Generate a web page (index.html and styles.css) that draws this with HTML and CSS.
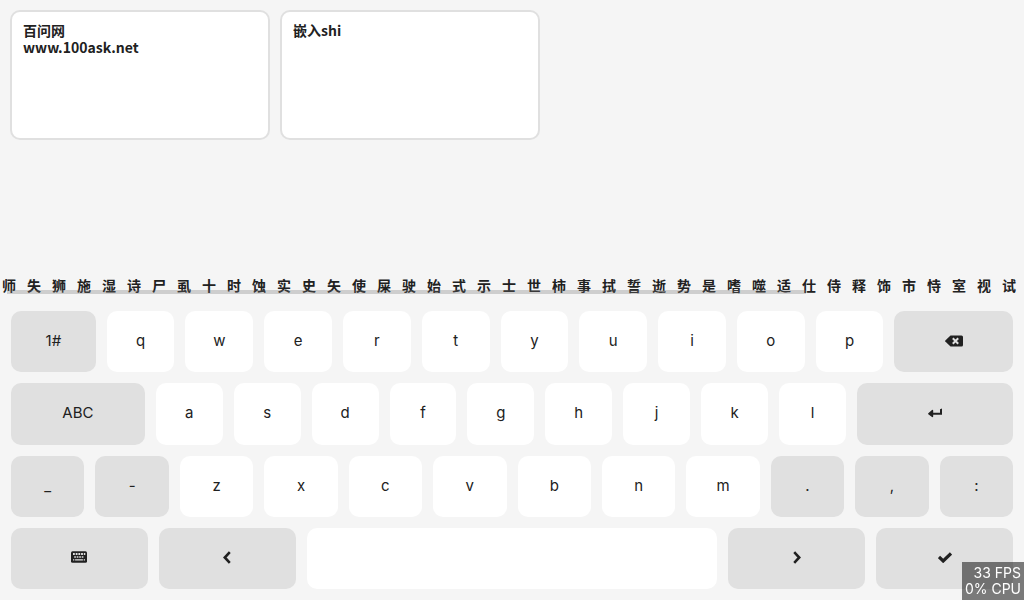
FILE: index.html
```html
<!DOCTYPE html>
<html lang="zh-CN">
<head>
<meta charset="utf-8">
<meta name="viewport" content="width=device-width, initial-scale=1">
<title>百问网</title>
<link rel="stylesheet" href="styles.css">
</head>
<body>
<main class="screen">
  <section class="notes">
    <textarea class="note" aria-label="文本框一" spellcheck="false">百问网
www.100ask.net</textarea>
    <textarea class="note" aria-label="文本框二" spellcheck="false">嵌入shi</textarea>
  </section>

  <div class="candidates">
    <button>师</button><button>失</button><button>狮</button><button>施</button><button>湿</button><button>诗</button><button>尸</button><button>虱</button><button>十</button><button>时</button><button>蚀</button><button>实</button><button>史</button><button>矢</button><button>使</button><button>屎</button><button>驶</button><button>始</button><button>式</button><button>示</button><button>士</button><button>世</button><button>柿</button><button>事</button><button>拭</button><button>誓</button><button>逝</button><button>势</button><button>是</button><button>嗜</button><button>噬</button><button>适</button><button>仕</button><button>侍</button><button>释</button><button>饰</button><button>市</button><button>恃</button><button>室</button><button>视</button><button>试</button>
    <div class="scrollbar"></div>
  </div>

  <section class="keyboard">
    <div class="row">
      <button class="key control w5">1#</button>
      <button class="key w4">q</button><button class="key w4">w</button><button class="key w4">e</button><button class="key w4">r</button><button class="key w4">t</button><button class="key w4">y</button><button class="key w4">u</button><button class="key w4">i</button><button class="key w4">o</button><button class="key w4">p</button>
      <button class="key control w7" aria-label="退格">
        <svg width="18" height="12" viewBox="0 0 18 12"><path fill="currentColor" d="M5.500.5h11Q18 .5 18 2v8q0 1.500-1.500 1.500h-11L.3 6.500Q0 6 .3 5.500Z"/><path stroke="#e0e0e0" stroke-width="2" d="m7.800 3.300 5.400 5.400m0-5.400-5.400 5.400"/></svg>
      </button>
    </div>
    <div class="row">
      <button class="key control w6">ABC</button>
      <button class="key w3">a</button><button class="key w3">s</button><button class="key w3">d</button><button class="key w3">f</button><button class="key w3">g</button><button class="key w3">h</button><button class="key w3">j</button><button class="key w3">k</button><button class="key w3">l</button>
      <button class="key control w7" aria-label="换行">
        <svg width="14" height="10" viewBox="0 0 14 10"><path fill="currentColor" d="M12 1.200 14 .5v6.200H5.200v1.800q-.4 1-1.200.5L.3 6.200Q-.1 5.700.3 5.200L4 2q.8-.5 1.200.5v2.200H12Z"/></svg>
      </button>
    </div>
    <div class="row">
      <button class="key control w1">_</button><button class="key control w1">-</button>
      <button class="key w1">z</button><button class="key w1">x</button><button class="key w1">c</button><button class="key w1">v</button><button class="key w1">b</button><button class="key w1">n</button><button class="key w1">m</button>
      <button class="key control w1">.</button><button class="key control w1">,</button><button class="key control w1">:</button>
    </div>
    <div class="row">
      <button class="key control w2" aria-label="键盘">
        <svg width="16" height="12" viewBox="0 0 16 12"><rect width="16" height="11.500" y=".2" rx="1.500" fill="currentColor"/><path stroke="#e0e0e0" stroke-width="1.800" stroke-dasharray="1.800 .9" d="M2 3h12.300"/><path stroke="#e0e0e0" stroke-width="1.700" stroke-dasharray="1.700 .8" d="M3.200 6h9.800"/><path stroke="#e0e0e0" stroke-width="1.300" d="M2 8.900h1.300m.8 0h7.800m.8 0H14"/></svg>
      </button>
      <button class="key control w2" aria-label="左移">
        <svg width="8" height="13" viewBox="0 0 8 13"><path fill="none" stroke="currentColor" stroke-width="2.600" d="M6.800 1.200 1.800 6.500l5 5.300"/></svg>
      </button>
      <button class="key w6" aria-label="空格"></button>
      <button class="key control w2" aria-label="右移">
        <svg width="8" height="13" viewBox="0 0 8 13"><path fill="none" stroke="currentColor" stroke-width="2.600" d="m1.200 1.200 5 5.300-5 5.300"/></svg>
      </button>
      <button class="key control w2" aria-label="确定">
        <svg width="14" height="11" viewBox="0 0 14 11"><path fill="none" stroke="currentColor" stroke-width="3.200" d="m1 5 4.200 4L13 1.500"/></svg>
      </button>
    </div>
  </section>
</main>
<div class="monitor">33 FPS<br>0% CPU</div>
</body>
</html>
```
FILE: styles.css
```css
* {
  box-sizing: border-box;
}

body {
  margin: 0;
  background: #f5f5f5;
  color: #212121;
  font-family: Inter, "Noto Sans", sans-serif;
  font-size: 15px;
}

button {
  margin: 0;
  padding: 0;
  border: 0;
  background: none;
  color: inherit;
  font: inherit;
}

.screen {
  display: flex;
  flex-direction: column;
  height: 100vh;
}

.notes {
  display: flex;
  flex: 1;
  align-items: flex-start;
  gap: 10px;
  padding: 10px;
}

.note {
  width: 260px;
  height: 130px;
  padding: 10px 11px;
  border: 2px solid #e0e0e0;
  border-radius: 10px;
  background: #fff;
  color: inherit;
  font: bold 14px/17px "Noto Sans CJK SC", sans-serif;
  resize: none;
  outline: none;
}

.candidates {
  position: relative;
  display: flex;
  justify-content: space-between;
  padding: 0 8px 6px 2px;
}

.candidates button {
  font: bold 14px/17px "Noto Sans CJK SC", sans-serif;
}

.scrollbar {
  position: absolute;
  left: 7px;
  bottom: 6px;
  width: 78%;
  height: 4px;
  background: rgba(117, 117, 117, 0.3);
}

.keyboard {
  display: flex;
  flex-direction: column;
  gap: 11px;
  height: 50vh;
  padding: 11px;
}

.row {
  display: flex;
  flex: 1;
  gap: 11px;
}

.key {
  display: flex;
  flex: 1 1 0;
  align-items: center;
  justify-content: center;
  min-width: 0;
  padding-bottom: 2px;
  border-radius: 10px;
  background: #fff;
}

.control {
  background: #e0e0e0;
}

.w2 { flex-grow: 2; }
.w3 { flex-grow: 3; }
.w4 { flex-grow: 4; }
.w5 { flex-grow: 5; }
.w6 { flex-grow: 6; }
.w7 { flex-grow: 7; }

.monitor {
  position: fixed;
  right: 0;
  bottom: 0;
  padding: 3px;
  background: rgba(0, 0, 0, 0.5);
  color: #fff;
  font-size: 14px;
  line-height: 16px;
  text-align: right;
}
```
